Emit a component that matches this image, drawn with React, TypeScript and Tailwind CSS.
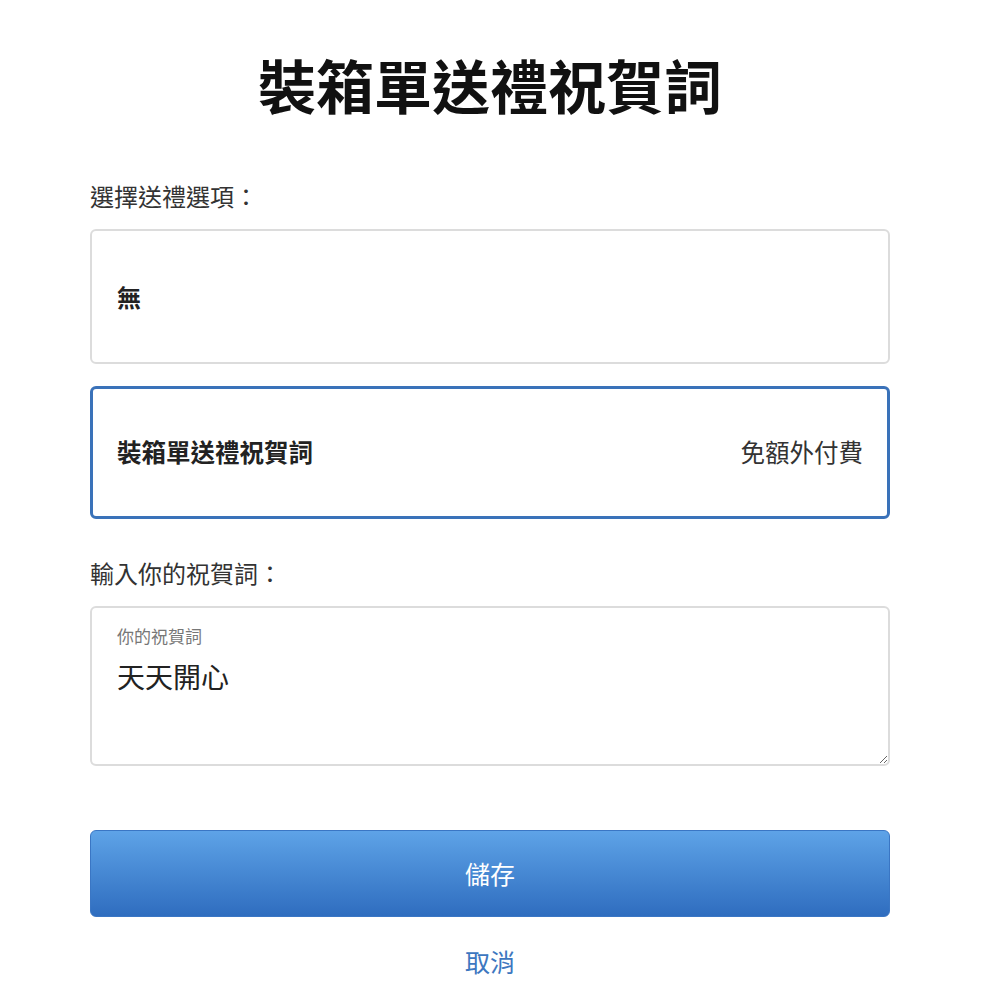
import { useState } from 'react';

const font = { fontFamily: '"Noto Sans CJK TC", "Noto Sans", sans-serif' };

export default function App() {
  const [selected, setSelected] = useState('card');
  const [message, setMessage] = useState('天天開心');

  return (
    <div className="min-h-[1003px] w-[1000px] bg-white" style={font}>
      <div className="ml-[90px] w-[800px] flex flex-col">
        <h1 className="mt-[55px] text-center text-[58px] font-bold leading-none text-[#111]">
          裝箱單送禮祝賀詞
        </h1>

        <p className="mt-[71px] text-[24px] leading-none text-[#333]">選擇送禮選項：</p>

        {/* Gift options */}
        <button
          onClick={() => setSelected('none')}
          className={`mt-[21px] h-[135px] flex items-center rounded-md bg-white text-left ${
            selected === 'none'
              ? 'border-[3px] border-[#3a72b9] px-[24px]'
              : 'border-2 border-[#dcdcdc] px-[25px]'
          }`}
        >
          <span className="text-[24px] font-bold leading-none text-[#222]">無</span>
        </button>

        <button
          onClick={() => setSelected('card')}
          className={`mt-[22px] h-[133px] flex items-center justify-between rounded-md bg-white text-left ${
            selected === 'card'
              ? 'border-[3px] border-[#3a72b9] px-[24px]'
              : 'border-2 border-[#dcdcdc] px-[25px]'
          }`}
        >
          <span className="text-[24.5px] font-bold leading-none text-[#222]">裝箱單送禮祝賀詞</span>
          <span className="text-[24.5px] leading-none text-[#333]">免額外付費</span>
        </button>

        <p className="mt-[42px] text-[24px] leading-none text-[#333]">輸入你的祝賀詞：</p>

        {/* Message box */}
        <div className="relative mt-[21px]">
          <label className="absolute left-[27px] top-[21px] text-[17px] leading-none text-[#777]">
            你的祝賀詞
          </label>
          <textarea
            value={message}
            onChange={(e) => setMessage(e.target.value)}
            className="block h-[160px] w-full resize-y rounded-md border-2 border-[#dcdcdc] bg-white px-[25px] pt-[54px] text-[28px] leading-[28px] text-[#222] outline-none"
            style={font}
          />
        </div>

        <button className="mt-[64px] h-[87px] rounded-md border border-[#3a76c4] bg-gradient-to-b from-[#5ea3e7] to-[#2f6dbf] text-[25px] leading-none text-white">
          儲存
        </button>

        <button className="mt-[32px] self-center text-[25px] leading-none text-[#3d77c0]">取消</button>
      </div>
    </div>
  );
}
